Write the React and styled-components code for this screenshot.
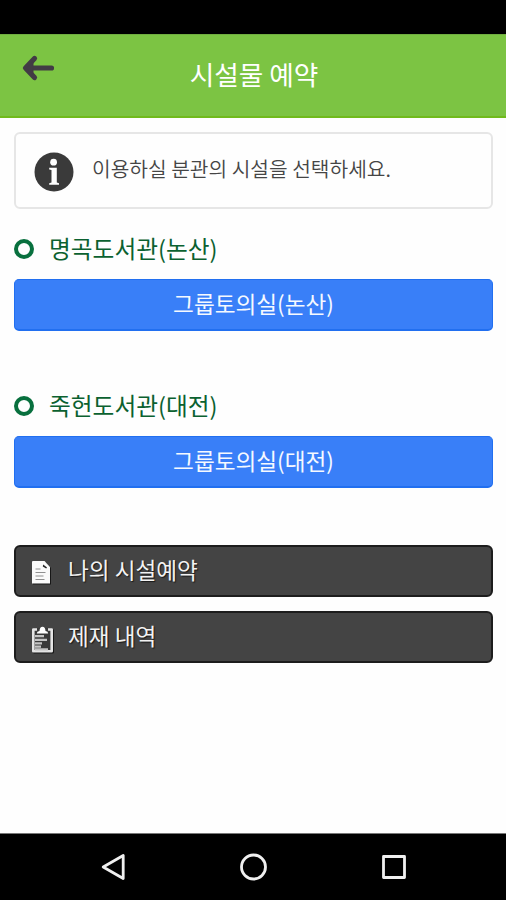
import React from "react";
import styled, { createGlobalStyle } from "styled-components";

const GlobalStyle = createGlobalStyle`
  * { box-sizing: border-box; }
  body {
    margin: 0;
    background: #fefefe;
    font-family: "Noto Sans CJK KR", "Noto Sans", sans-serif;
  }
`;

const Screen = styled.div`
  display: flex;
  flex-direction: column;
  width: 506px;
  height: 900px;
  overflow: hidden;
`;

const StatusBar = styled.div`
  flex: 0 0 34px;
  background: #000;
`;

const Header = styled.header`
  flex: 0 0 84px;
  display: grid;
  grid-template-columns: 62px 1fr 60px;
  background: #7cc443;
  border-top: 1px solid #70ad40;
  border-bottom: 2px solid #70ba1c;
`;

const BackButton = styled.button`
  align-self: start;
  display: flex;
  margin: 19px 0 0 21px;
  padding: 0;
  border: 0;
  background: none;
`;

const Title = styled.h1`
  margin: 0;
  padding-top: 19px;
  color: #fff;
  font-size: 26.7px;
  line-height: 40px;
  font-weight: 400;
  text-align: center;
`;

const Main = styled.main`
  flex: 1;
  padding: 14px 13px 0 14px;
`;

const Notice = styled.div`
  display: flex;
  height: 77px;
  padding: 18px 0 0 18px;
  gap: 18px;
  border: 2px solid #e6e6e6;
  border-radius: 6px;
`;

const NoticeText = styled.p`
  margin: 0;
  color: #454545;
  font-size: 20.3px;
  line-height: 32px;
  font-weight: 350;
`;

const Branch = styled.section`
  padding-top: 20px;
  height: ${(p) => p.$height}px;
`;

const BranchTitle = styled.h2`
  display: flex;
  gap: 15px;
  height: 40px;
  margin: 0 0 10px;
  color: #0b6130;
  font-size: 23.7px;
  line-height: 38px;
  font-weight: 400;
`;

const Ring = styled.span`
  width: 20px;
  height: 20px;
  margin-top: 10px;
  border: 4.5px solid #08703e;
  border-radius: 50%;
`;

const RoomButton = styled.button`
  display: block;
  width: 100%;
  height: 52px;
  padding: 0 0 1px;
  border: 1px solid #216ff0;
  border-bottom-width: 2px;
  border-radius: 5px;
  background: #397ff8;
  color: #f5f9ff;
  font: 400 22.6px/48px "Noto Sans CJK KR", sans-serif;
`;

const Menu = styled.nav`
  display: flex;
  flex-direction: column;
  gap: 14px;
`;

const MenuButton = styled.button`
  display: flex;
  height: 52px;
  padding: 0 0 0 15px;
  gap: 13px;
  border: 2px solid #1d1d1d;
  border-radius: 6px;
  background: #444;
  color: #f3f3f3;
  font: 400 22.6px/46px "Noto Sans CJK KR", sans-serif;
  text-shadow: 1px 1px 1px #171717;

  svg {
    margin-top: 13px;
    filter: drop-shadow(1px 1px 0 #171717);
  }
`;

const SystemNav = styled.footer`
  flex: 0 0 67px;
  display: flex;
  justify-content: space-between;
  align-items: flex-start;
  padding: 18px 97px 0 99px;
  border-top: 1px solid #777;
  background: #000;
`;

const BackArrow = () => (
  <svg width="34" height="28" viewBox="0 0 34 28" fill="none" stroke="#423b45" strokeWidth="5.2" strokeLinecap="round" strokeLinejoin="round">
    <path d="M13.5 4.5 4.5 14l9 9.5M5 14h25.5" />
    <path d="m5 14 7-6.5v13z" fill="#423b45" strokeWidth="1" />
  </svg>
);

const InfoIcon = () => (
  <svg width="40" height="40" viewBox="0 0 40 40">
    <circle cx="20" cy="20" r="19.5" fill="#3a3a3a" />
    <circle cx="19.6" cy="10.2" r="3.4" fill="#fff" />
    <path d="M15.2 15.8h7.6v14.6l2.2.8v1.600H15.200v-1.600l2.300-.8V18l-2.300-.6z" fill="#fff" />
  </svg>
);

const DocumentIcon = () => (
  <svg width="24" height="26" viewBox="0 0 24 26">
    <path d="M2 1h11.5L19 7v16.5H1V2q0-1 1-1z" fill="#fafafa" />
    <path d="M12.2 4.600 16 7.600l-.8.8-3.400-2z" fill="#222" />
    <path d="M4.500 9h5M4.500 12.500h10M4.500 16h8M4.500 19.500h9" stroke="#909090" strokeWidth="1.2" />
  </svg>
);

const ClipboardIcon = () => (
  <svg width="24" height="28" viewBox="0 0 24 28">
    <path d="M2.300 3.500h18.400v21.700H2.300z" fill="#3a3a3a" stroke="#e4e4e4" strokeWidth="2.600" strokeLinejoin="round" />
    <path d="M6 2h11v5H6z" fill="#3a3a3a" />
    <path d="M5.800 7.400q0-2 2.700-2.400Q8.800.8 11.500.8T14.500 5q2.700.4 2.700 2.400z" fill="#fff" />
    <path d="M4 10.200h9M4 13.800h12M4 17.300h7M4 20.700h6M4 23.300h13" stroke="#c4c4c4" strokeWidth="2.200" />
  </svg>
);

const NavIcon = ({ children }) => (
  <svg width="30" height="30" viewBox="0 0 30 30" fill="none" stroke="#f0f0f0" strokeWidth="2.8" strokeLinejoin="round">
    {children}
  </svg>
);

const branches = [
  { name: "명곡도서관(논산)", room: "그룹토의실(논산)", height: 157 },
  { name: "죽헌도서관(대전)", room: "그룹토의실(대전)", height: 179 },
];

export default function App() {
  return (
    <>
      <GlobalStyle />
      <Screen>
        <StatusBar />
        <Header>
          <BackButton aria-label="뒤로"><BackArrow /></BackButton>
          <Title>시설물 예약</Title>
        </Header>
        <Main>
          <Notice>
            <InfoIcon />
            <NoticeText>이용하실 분관의 시설을 선택하세요.</NoticeText>
          </Notice>
          {branches.map((b) => (
            <Branch key={b.name} $height={b.height}>
              <BranchTitle><Ring />{b.name}</BranchTitle>
              <RoomButton>{b.room}</RoomButton>
            </Branch>
          ))}
          <Menu>
            <MenuButton><DocumentIcon />나의 시설예약</MenuButton>
            <MenuButton><ClipboardIcon />제재 내역</MenuButton>
          </Menu>
        </Main>
        <SystemNav>
          <NavIcon><path d="M24.2 3.5v23L4.2 15z" /></NavIcon>
          <NavIcon><circle cx="14.500" cy="15" r="12" /></NavIcon>
          <NavIcon><path d="M4.5 4.5h21v21h-21z" /></NavIcon>
        </SystemNav>
      </Screen>
    </>
  );
}
